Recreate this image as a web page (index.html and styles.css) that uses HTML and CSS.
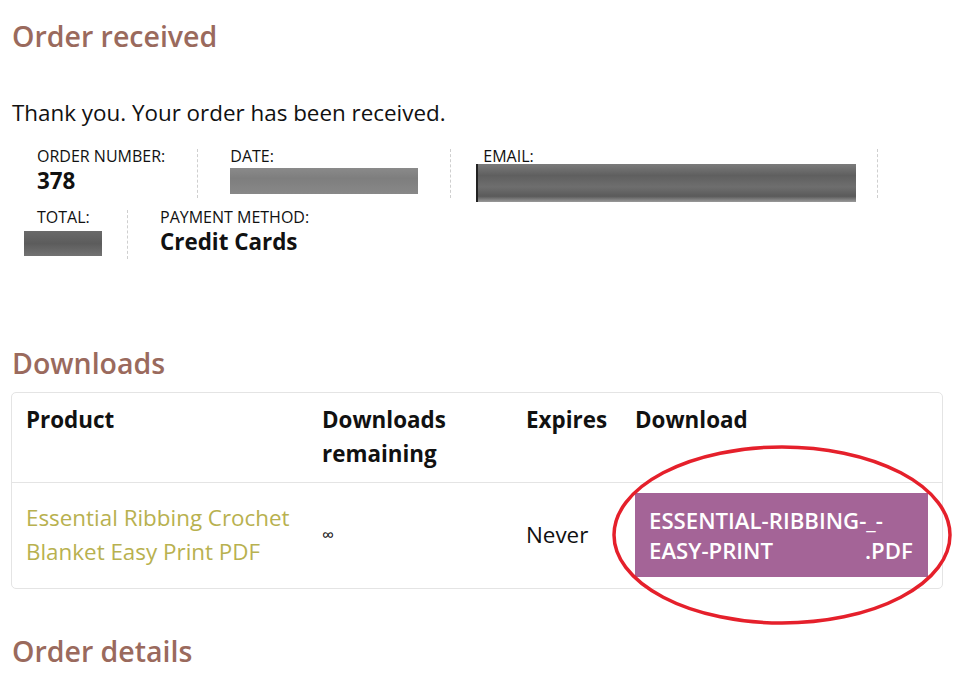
FILE: index.html
```html
<!DOCTYPE html>
<html lang="en">
<head>
  <meta charset="UTF-8">
  <title>Order received</title>
  <meta name="viewport" content="width=device-width, initial-scale=1.0">
  <link rel="stylesheet" href="styles.css">
</head>
<body>
  <div class="page">
    <h2 class="title">Order received</h2>
    <p class="notice">Thank you. Your order has been received.</p>

    <!-- order overview -->
    <ul class="overview">
      <li>
        <span class="label">Order number:</span>
        <strong>378</strong>
      </li>
      <li>
        <span class="label">Date:</span>
        <strong><span class="redact redact-date"></span></strong>
      </li>
      <li>
        <span class="label">Email:</span>
        <strong><span class="redact redact-email"></span></strong>
      </li>
      <li>
        <span class="label">Total:</span>
        <strong><span class="redact redact-total"></span></strong>
      </li>
      <li class="last">
        <span class="label">Payment method:</span>
        <strong>Credit Cards</strong>
      </li>
    </ul>

    <!-- downloads -->
    <h2 class="title downloads-title">Downloads</h2>
    <table class="downloads">
      <thead>
        <tr>
          <th class="col-product">Product</th>
          <th class="col-remaining">Downloads remaining</th>
          <th class="col-expires">Expires</th>
          <th class="col-file">Download</th>
        </tr>
      </thead>
      <tbody>
        <tr>
          <td><a href="#" class="product-link">Essential Ribbing Crochet Blanket Easy Print PDF</a></td>
          <td class="remaining">&infin;</td>
          <td>Never</td>
          <td>
            <div class="annot">
              <a href="#" class="file-btn">ESSENTIAL-RIBBING-_-<br>EASY-PRINT<span class="gap"></span>.PDF</a>
              <svg class="circle" width="344" height="184" viewBox="0 0 344 184">
                <ellipse cx="172" cy="92" rx="168" ry="88" fill="none" stroke="#e5202b" stroke-width="3.5"/>
              </svg>
            </div>
          </td>
        </tr>
      </tbody>
    </table>

    <h2 class="title details-title">Order details</h2>
  </div>
</body>
</html>
```

FILE: styles.css
```css
* { box-sizing: border-box; }
body { margin: 0; background: #fff; color: #111; font-family: "Open Sans", "Liberation Sans", sans-serif; }
.page { width: 943px; padding-left: 12px; }

.title { font-size: 28.5px; font-weight: 600; color: #9a6a5d; line-height: 35px; margin: 19px 0 0 0; }
.notice { font-size: 22.4px; line-height: 34px; margin: 42px 0 0 0; }

.overview { list-style: none; margin: 19px 0 0 -7px; padding: 0; display: flex; flex-wrap: wrap; row-gap: 12px; }
.overview li { padding: 0 32px; border-right: 1px dashed #cfcfcf; text-transform: uppercase; }
.overview li.last { border-right: none; }
.overview .label { display: block; font-size: 16px; line-height: 15px; }
.overview strong { display: block; font-size: 22.4px; line-height: 34px; font-weight: 700; text-transform: none; }

.redact { display: inline-block; vertical-align: middle; background: linear-gradient(180deg, #8a8a8a, #7e7e7e 40%, #888 100%); }
.redact-date { width: 188px; height: 26px; margin-top: -4px; }
.redact-email { width: 380px; height: 38px; margin: -4px -11px -4px -7px; background: linear-gradient(180deg, #7b7b7b, #5f5f5f 30%, #6e6e6e 60%, #5a5a5a 85%, #9a9a9a); border-left: 2px solid #222; }
.redact-total { width: 78px; height: 25px; margin: -2px -7px 0 -13px; background: linear-gradient(180deg, #6a6a6a, #5c5c5c 50%, #727272); }

.downloads-title { margin-top: 87px; }
.downloads { width: 932px; margin: 11px 0 0 -1px; border: 1px solid #e4e4e4; border-radius: 5px; border-collapse: separate; border-spacing: 0; table-layout: fixed; font-size: 22.4px; line-height: 34px; }
.downloads th, .downloads td { padding: 10px 14px; text-align: left; vertical-align: top; }
.downloads th { font-weight: 700; border-bottom: 1px solid #e4e4e4; padding-bottom: 11px; }
.downloads td { vertical-align: middle; padding-bottom: 11px; }
.col-product { width: 296px; }
.col-remaining { width: 204px; }
.col-expires { width: 109px; }
.product-link { color: #b8b14f; text-decoration: none; }
.remaining { font-size: 17px; }

.annot { position: relative; }
.file-btn { display: block; background: #a46497; color: #fff; text-decoration: none; font-weight: 600; font-size: 22.2px; line-height: 30px; padding: 13px 14px 11px 14px; }
.file-btn .gap { display: inline-block; width: 92px; }
.circle { position: absolute; left: 50%; top: 50%; margin: -92px 0 0 -172px; pointer-events: none; }

.details-title { margin-top: 45px; }
```
